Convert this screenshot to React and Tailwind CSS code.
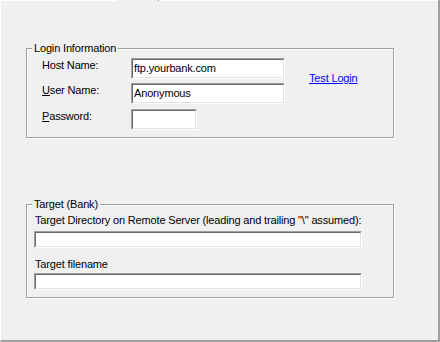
function Field({ className = "", children }) {
  return (
    <div className={`border-t border-l border-[#a0a0a0] border-r border-b border-r-white border-b-white ${className}`}>
      <div className="flex h-full items-center border-t border-l border-[#696969] border-r border-b border-r-[#e3e3e3] border-b-[#e3e3e3] bg-white px-px">
        {children}
      </div>
    </div>
  );
}

function GroupBox({ title, className = "", children }) {
  return (
    <div className={`relative border border-[#a0a0a0] shadow-[inset_1px_1px_0_#fff,1px_1px_0_#fff] ${className}`}>
      <span className="absolute left-[5px] top-[-7px] bg-[#f0f0f0] px-[2px] leading-[13px]">{title}</span>
      {children}
    </div>
  );
}

export default function App() {
  return (
    <div className="flex h-[342px] w-[440px] flex-col bg-[#f0f0f0] font-['Liberation_Sans',Arial,sans-serif] text-[11px] leading-[13px] tracking-[-0.16px] text-black">
      <div className="flex h-px">
        <div className="w-[116px] bg-white" />
        <div className="w-[42px]" />
        <div className="w-px bg-[#a0a0a0]" />
        <div className="flex-1 bg-white" />
        <div className="w-[2px] bg-[#a0a0a0]" />
      </div>
      <div className="flex flex-1 flex-col border-l border-white border-r-2 border-b-2 border-r-[#a0a0a0] border-b-[#a0a0a0] pl-[25px] pt-[47px]">
        <GroupBox title="Login Information" className="h-[90px] w-[368px]">
          <div className="flex pl-[15px] pt-[9px]">
            <div className="flex flex-col">
              <div className="flex items-start">
                <span className="mt-px w-[89px]">Host Name:</span>
                <Field className="h-[21px] w-[154px]">ftp.yourbank.com</Field>
              </div>
              <div className="mt-[4px] flex items-start">
                <span className="mt-px w-[89px]">
                  <u>U</u>ser Name:
                </span>
                <Field className="h-[21px] w-[154px]">Anonymous</Field>
              </div>
              <div className="mt-[5px] flex items-start">
                <span className="mt-px w-[89px]">
                  <u>P</u>assword:
                </span>
                <Field className="h-[21px] w-[66px]" />
              </div>
            </div>
            <div className="ml-[24px] pt-[14px]">
              <a href="#" className="text-[#0000ff] underline">
                Test Login
              </a>
            </div>
          </div>
        </GroupBox>
        <GroupBox title="Target (Bank)" className="mt-[66px] h-[94px] w-[368px]">
          <div className="flex flex-col pl-[7px] pt-[9px]">
            <span className="pl-px">Target Directory on Remote Server (leading and trailing "\" assumed):</span>
            <Field className="mt-[4px] h-[17px] w-[328px]" />
            <span className="mt-[10px] pl-px">Target filename</span>
            <Field className="mt-[2px] h-[17px] w-[328px]" />
          </div>
        </GroupBox>
      </div>
    </div>
  );
}
